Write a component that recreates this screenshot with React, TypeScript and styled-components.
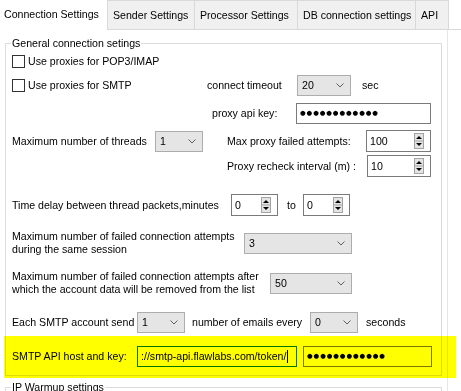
import React from 'react';
import styled, { createGlobalStyle } from 'styled-components';

const GlobalStyle = createGlobalStyle`
	html, body {
		margin: 0;
		padding: 0;
		background: #fff;
	}
	body {
		font-family: 'Liberation Sans', Arial, sans-serif;
		font-size: 10.6px;
		color: #000;
		overflow: hidden;
	}
`;

const tabs = [
	{ label: 'Connection Settings', width: 108, active: true },
	{ label: 'Sender Settings', width: 87 },
	{ label: 'Processor Settings', width: 103 },
	{ label: 'DB connection settings', width: 118 },
	{ label: 'API', width: 33 },
];

const MASK = '●●●●●●●●●●●●';

function Chevron() {
	return (
		<svg width='8' height='5' viewBox='0 0 8 5'>
			<polyline points='0.5,0.5 4,4 7.5,0.5' fill='none' stroke='#606060' strokeWidth='1' />
		</svg>
	);
}

function SpinArrows() {
	return (
		<svg width='10' height='16' viewBox='0 0 10 16'>
			<rect x='0.5' y='0.5' width='9' height='15' fill='#e4e4e4' stroke='#a3a3a3' />
			<line x1='0.5' y1='8' x2='9.5' y2='8' stroke='#a3a3a3' />
			<path d='M2 6h6L5 3z' fill='#000' />
			<path d='M2 10h6l-3 3z' fill='#000' />
		</svg>
	);
}

function ComboBox({ value, width }: { value: string; width: number }) {
	return (
		<Combo $w={width}>
			<span>{value}</span>
			<Chevron />
		</Combo>
	);
}

function SpinEdit({ value, width }: { value: string; width: number }) {
	return (
		<Spin $w={width}>
			<span>{value}</span>
			<SpinArrows />
		</Spin>
	);
}

export default function App() {
	return (
		<>
			<GlobalStyle />
			<Window>
				<TabBar>
					{tabs.map((t) => (
						<Tab key={t.label} $w={t.width} $active={t.active}>
							{t.label}
						</Tab>
					))}
					<TabFill />
				</TabBar>

				<Panel>
					<Group $mt={0}>
						<Legend>General connection setings</Legend>

						<Row>
							<CheckBox />
							<Label>Use proxies for POP3/IMAP</Label>
						</Row>

						<Row $mt={2}>
							<Label $w={195}>
								<CheckBox />
								Use proxies for SMTP
							</Label>
							<Label $w={90}>connect timeout</Label>
							<ComboBox value='20' width={54} />
							<Label $pl={11}>sec</Label>
						</Row>

						<Row $mt={6}>
							<Label $w={200} />
							<Label $w={84}>proxy api key:</Label>
							<TextInput $w={135}>
								<Dots>{MASK}</Dots>
							</TextInput>
						</Row>

						<Row $mt={6}>
							<Label $w={143}>Maximum number of threads</Label>
							<ComboBox value='1' width={48} />
							<Label $w={163} $pl={24}>
								Max proxy failed attempts:
							</Label>
							<SpinEdit value='100' width={65} />
						</Row>

						<Row $mt={3}>
							<Label $w={215} />
							<Label $w={140}>Proxy recheck interval (m) :</Label>
							<SpinEdit value='10' width={64} />
						</Row>

						<Row $mt={17}>
							<Label $w={219}>Time delay between thread packets,minutes</Label>
							<SpinEdit value='0' width={47} />
							<Label $w={25} $pl={9}>
								to
							</Label>
							<SpinEdit value='0' width={47} />
						</Row>

						<Row $mt={14} $h={26}>
							<Label $w={232}>
								Maximum number of failed connection attempts
								<br />
								during the same session
							</Label>
							<ComboBox value='3' width={108} />
						</Row>

						<Row $mt={14} $h={26}>
							<Label $w={258}>
								Maximum number of failed connection attempts after
								<br />
								which the account data will be removed from the list
							</Label>
							<ComboBox value='50' width={82} />
						</Row>

						<Row $mt={15}>
							<Label $w={125}>Each SMTP account send</Label>
							<ComboBox value='1' width={48} />
							<Label $w={125} $pl={7}>
								number of emails every
							</Label>
							<ComboBox value='0' width={48} />
							<Label $pl={8}>seconds</Label>
						</Row>

						<Row $mt={12}>
							<Label $w={125}>SMTP API host and key:</Label>
							<TextInput $w={160} $focus>
								<span>://smtp-api.flawlabs.com/token/</span>
								<Caret />
							</TextInput>
							<TextInput $w={129} $ml={6}>
								<Dots>{MASK}</Dots>
							</TextInput>
						</Row>
					</Group>

					<Group $mt={4}>
						<Legend>IP Warmup settings</Legend>
						<Row $h={40} />
					</Group>
				</Panel>

				<Highlight />
			</Window>
		</>
	);
}

const Window = styled.div`
	position: relative;
	width: 461px;
	height: 391px;
	overflow: hidden;
	background: #fff;
`;

const TabBar = styled.div`
	display: flex;
	height: 30px;
`;

const Tab = styled.div<{ $w: number; $active?: boolean }>`
	box-sizing: border-box;
	width: ${(p) => p.$w}px;
	height: 30px;
	flex-shrink: 0;
	display: flex;
	align-items: center;
	white-space: nowrap;
	background: ${(p) => (p.$active ? '#fff' : '#f0f0f0')};
	border-right: 1px solid #d9d9d9;
	border-top: ${(p) => (p.$active ? 'none' : '1px solid #d9d9d9')};
	border-bottom: ${(p) => (p.$active ? 'none' : '1px solid #d9d9d9')};
	padding: ${(p) => (p.$active ? '0 0 3px 4px' : '0 0 0 5px')};
`;

const TabFill = styled.div`
	flex: 1;
	border-bottom: 1px solid #d9d9d9;
`;

const Panel = styled.div`
	box-sizing: border-box;
	width: 448px;
	height: 361px;
	padding: 6px 0 0 5px;
	border-right: 1px solid #e6e6e6;
`;

const Group = styled.fieldset<{ $mt: number }>`
	box-sizing: border-box;
	width: 437px;
	min-width: 0;
	margin: ${(p) => p.$mt}px 0 0 0;
	padding: 0 6px 8px 6px;
	border: 1px solid #dcdcdc;
`;

const Legend = styled.legend`
	padding: 0 1px;
	margin-left: -1px;
	line-height: 14px;
`;

const Row = styled.div<{ $mt?: number; $h?: number }>`
	display: flex;
	align-items: center;
	height: ${(p) => p.$h ?? 22}px;
	margin-top: ${(p) => p.$mt ?? 0}px;
`;

const Label = styled.span<{ $w?: number; $pl?: number }>`
	display: flex;
	align-items: center;
	flex-shrink: 0;
	box-sizing: border-box;
	width: ${(p) => (p.$w ? `${p.$w}px` : 'auto')};
	padding-left: ${(p) => p.$pl ?? 0}px;
	line-height: 13px;
	white-space: nowrap;
`;

const CheckBox = styled.span`
	display: inline-block;
	box-sizing: border-box;
	width: 13px;
	height: 13px;
	margin-right: 3px;
	border: 1px solid #333;
	background: #fff;
	flex-shrink: 0;
`;

const Combo = styled.div<{ $w: number }>`
	box-sizing: border-box;
	width: ${(p) => p.$w}px;
	height: 21px;
	flex-shrink: 0;
	display: flex;
	align-items: center;
	justify-content: space-between;
	padding: 0 6px 0 4px;
	border: 1px solid #adadad;
	background: #e5e5e5;
`;

const TextInput = styled.div<{ $w: number; $focus?: boolean; $ml?: number }>`
	box-sizing: border-box;
	width: ${(p) => p.$w}px;
	height: 21px;
	flex-shrink: 0;
	display: flex;
	align-items: center;
	margin-left: ${(p) => p.$ml ?? 0}px;
	padding: 0 3px;
	overflow: hidden;
	white-space: nowrap;
	border: 1px solid ${(p) => (p.$focus ? '#0078d7' : '#7a7a7a')};
	background: #fff;
`;

const Dots = styled.span`
	font-family: 'DejaVu Sans', sans-serif;
	font-size: 6.5px;
	letter-spacing: 0.9px;
`;

const Caret = styled.span`
	width: 1px;
	height: 13px;
	margin-left: 1px;
	background: #000;
	flex-shrink: 0;
`;

const Spin = styled.div<{ $w: number }>`
	box-sizing: border-box;
	width: ${(p) => p.$w}px;
	height: 22px;
	flex-shrink: 0;
	display: flex;
	align-items: center;
	justify-content: space-between;
	padding: 0 6px 0 3px;
	border: 1px solid #7a7a7a;
	background: #fff;
`;

const Highlight = styled.div`
	position: absolute;
	left: 4px;
	top: 336px;
	width: 452px;
	height: 42px;
	background: #ffff00;
	mix-blend-mode: multiply;
	pointer-events: none;
`;
